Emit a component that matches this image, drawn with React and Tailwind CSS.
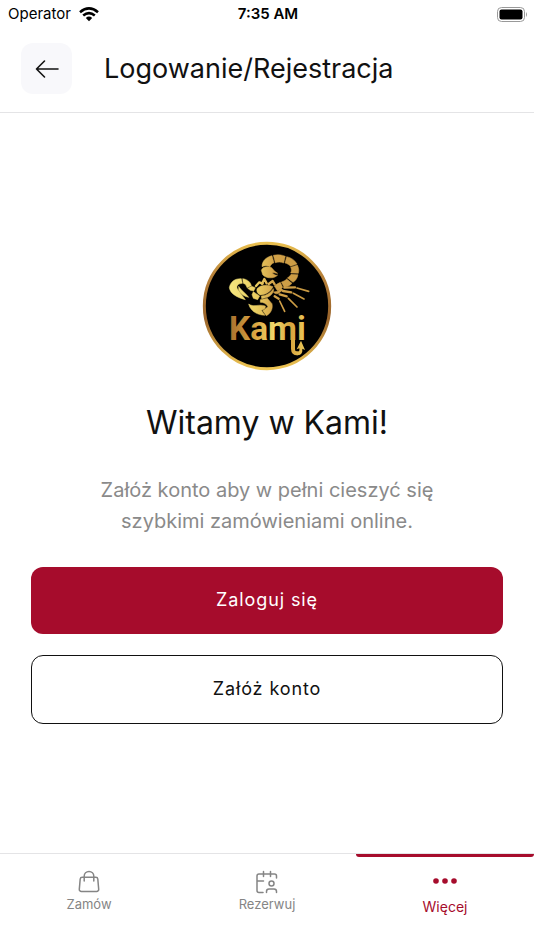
import React from "react";

const gold = "url(#gold)";

function Logo() {
  return (
    <svg viewBox="15 15 390 390" className="size-[130px]" role="img" aria-label="Kami">
      <defs>
        <linearGradient id="ring" x1="0" y1="0" x2="0" y2="1">
          <stop offset="0" stopColor="#e9bf4f" />
          <stop offset="0.25" stopColor="#b8823a" />
          <stop offset="0.6" stopColor="#9a642b" />
          <stop offset="1" stopColor="#efc653" />
        </linearGradient>
        <linearGradient id="gold" gradientUnits="userSpaceOnUse" x1="100" y1="150" x2="320" y2="150">
          <stop offset="0" stopColor="#f4e67e" />
          <stop offset="0.35" stopColor="#ebcf62" />
          <stop offset="0.6" stopColor="#d2a148" />
          <stop offset="1" stopColor="#c99a43" />
        </linearGradient>
        <linearGradient id="word" gradientUnits="userSpaceOnUse" x1="98" y1="0" x2="324" y2="0">
          <stop offset="0" stopColor="#a8702e" />
          <stop offset="0.35" stopColor="#dca843" />
          <stop offset="0.6" stopColor="#f0da6c" />
          <stop offset="0.8" stopColor="#d6a23d" />
          <stop offset="1" stopColor="#ecc858" />
        </linearGradient>
      </defs>
      <circle cx="210" cy="210" r="188" fill="#000" stroke="url(#ring)" strokeWidth="9" />
      <g fill={gold} stroke={gold} strokeWidth="1.500" strokeLinejoin="round">
        <path d="M193 103C196 92 212 90 222 94C229 99 231 106 242 112C233 112 230 109 226 111C233 117 238 119 242 117C232 129 206 128 197 116Z" />
        <path d="M195 92C195 74 208 63 225 59L231 80C224 83 220 88 219 92C211 88 203 88 195 92Z" />
        <path d="M229 58C241 55 254 56 265 61L260 81C251 77 242 78 235 80Z" />
        <path d="M269 62C283 65 294 73 300 84L281 91C276 86 271 83 264 81Z" />
        <path d="M301 87C306 97 306 105 304 112L281 111C284 105 284 100 281 94Z" />
        <path d="M303 116C301 127 296 134 288 139L271 126C277 122 280 119 282 115Z" />
        <path d="M285 142C277 151 268 154 261 153L253 138C260 136 265 133 269 129Z" />
        <path d="M257 154C252 160 246 163 241 164L232 150C238 145 244 142 250 139Z" />
        <path d="M97 155C100 137 114 127 133 128L136 142C124 143 117 149 121 158L145 191C116 184 99 170 97 155Z" />
        <path d="M137 128C152 130 161 139 163 149L150 155C148 148 145 144 139 142Z" />
        <path d="M125 151C132 163 144 169 155 184C142 182 131 174 125 161Z" />
        <path d="M164 151L175 155L170 165L160 163L152 157Z" />
        <path d="M180 158C190 147 210 145 228 152C223 165 207 176 190 177C181 174 178 166 180 158Z" />
        <path d="M169 167L179 174L188 180L182 191L169 187L165 176Z" />
        <path d="M193 180C210 178 222 169 229 158C233 166 223 179 211 184L194 188Z" />
        <path d="M190 191L211 187L225 203C229 220 219 234 208 239L197 224L213 212C207 202 199 199 190 199Z" />
        <path d="M155 204C170 215 184 203 205 210C207 220 195 222 193 223L204 238C180 237 160 225 155 204Z" />
        <path d="M229 168C235 175 241 175 247 170L258 162L252 157L242 166Z" />
      </g>
      <g fill="none" stroke={gold} strokeWidth="7" strokeLinejoin="round" strokeLinecap="round">
        <path d="M177 150L187 139L197 143" />
        <path d="M195 143L202 129L209 142" />
        <path d="M215 144L227 135L233 145" />
        <path d="M262 155L294 154" />
        <path d="M300 156L335 166" strokeWidth="5" />
        <path d="M258 165L283 169" />
        <path d="M289 172L321 189" strokeWidth="5" />
        <path d="M248 175L269 181" />
        <path d="M274 187L300 213" strokeWidth="5" />
        <path d="M233 181L245 188" />
        <path d="M248 195L263 226" strokeWidth="5" />
      </g>
      <text x="96" y="313" fill="url(#word)" className="font-['Roboto',sans-serif] text-[100px] font-bold">Kami</text>
      <path d="M288 309V338Q288 353 302 352" fill="none" stroke="url(#word)" strokeWidth="12" />
      <path d="M299 346Q309 349 307 337L299 340L312 314L324 342L316 338Q318 358 299 358Z" fill="url(#word)" />
    </svg>
  );
}

function BagIcon() {
  return (
    <svg viewBox="0 0 24 24" className="size-6" fill="none" stroke="currentColor" strokeWidth="1.500" strokeLinecap="round" strokeLinejoin="round" aria-hidden="true">
      <path d="M5.200 7.200h13.600a2 2 0 0 1 2 1.800l.9 10.300a2 2 0 0 1-2 2.200H4.300a2 2 0 0 1-2-2.200L3.200 9a2 2 0 0 1 2-1.800Z" />
      <path d="M7.200 11V6.200a4.800 4.800 0 0 1 9.600 0V11" />
    </svg>
  );
}

function BookingIcon() {
  return (
    <svg viewBox="0 0 24 24" className="size-6" fill="none" stroke="currentColor" strokeWidth="1.500" strokeLinecap="round" strokeLinejoin="round" aria-hidden="true">
      <path d="M8 22.500H4a2 2 0 0 1-2-2V6a2 2 0 0 1 2-2h15.500a2 2 0 0 1 2 2v2M8.500 1.500v5M15.500 1.500v5M2 11h6.500" />
      <circle cx="16.500" cy="13.500" r="2.500" />
      <path d="M11.500 22.500v-1a2.500 2.500 0 0 1 2.500-2.500h5a2.500 2.500 0 0 1 2.500 2.500v1" />
    </svg>
  );
}

function StatusBar() {
  return (
    <div className="grid h-7 grid-cols-3 items-center pr-1.5 pl-2 text-[15px] leading-5 text-black">
      <div className="flex items-center gap-2">
        <span>Operator</span>
        <svg viewBox="0 0 20 15" className="h-[15px] w-5" fill="none" stroke="currentColor" strokeWidth="2.600" aria-label="Wi-Fi">
          <path d="M1 5.200Q10-2.300 19 5.200M4.200 8.600Q10 3.800 15.800 8.600" />
          <path d="M6.800 11Q10 8.200 13.200 11L10 14.300Z" fill="currentColor" stroke="none" />
        </svg>
      </div>
      <span className="text-center font-semibold">7:35 AM</span>
      <svg viewBox="0 0 32 15" className="h-[15px] w-8 justify-self-end" aria-label="Bateria">
        <rect x="1.500" y="0.500" width="27" height="14" rx="4" fill="none" stroke="#999" />
        <rect x="3.500" y="2.500" width="23" height="10" rx="2" fill="#000" />
        <path d="M30 5q2 2.500 0 5Z" fill="#999" />
      </svg>
    </div>
  );
}

export default function App() {
  return (
    <div className="flex min-h-screen flex-col bg-white font-['Inter',sans-serif] text-[#111]">
      <StatusBar />
      <header className="flex items-center gap-8 border-b border-[#e4e4e6] px-[21px] pt-[15px] pb-[18px]">
        <button type="button" aria-label="Wstecz" className="flex size-[51px] shrink-0 items-center justify-center rounded-xl bg-[#f8f8fb]">
          <svg viewBox="0 0 24 20" className="h-5 w-6" fill="none" stroke="currentColor" strokeWidth="1.600" strokeLinecap="round" strokeLinejoin="round" aria-hidden="true">
            <path d="M23 10H1.500M9.500 2L1.500 10l8 8" />
          </svg>
        </button>
        <h1 className="text-[27px] leading-9">Logowanie/Rejestracja</h1>
      </header>

      <main className="flex flex-1 flex-col items-center justify-center px-[31px] pb-0.5 text-center">
        <Logo />
        <h2 className="mt-8 text-[32px] leading-10">Witamy w Kami!</h2>
        <p className="mt-8 max-w-[360px] text-xl leading-[31px] text-[#8a8a8a]">Załóż konto aby w pełni cieszyć się szybkimi zamówieniami online.</p>
        <button type="button" className="mt-[30px] h-[67px] w-full rounded-xl bg-[#a60c2c] text-lg tracking-wider text-white">Zaloguj się</button>
        <button type="button" className="mt-[21px] h-[69px] w-full rounded-xl border border-[#111] text-lg tracking-wider">Załóż konto</button>
      </main>

      <nav className="grid h-[97px] grid-cols-3 border-t border-[#e4e4e6] text-[13px] leading-4 text-[#858585]">
        <a href="#zamow" className="flex flex-col items-center gap-0.5 pt-4">
          <BagIcon />
          <span>Zamów</span>
        </a>
        <a href="#rezerwuj" className="flex flex-col items-center gap-0.5 pt-4">
          <BookingIcon />
          <span>Rezerwuj</span>
        </a>
        <a href="#wiecej" aria-current="page" className="flex flex-col items-center gap-1 text-[#a60c2c]">
          <span className="mb-2 h-[3px] w-full rounded-b-sm bg-[#a60c2c]" />
          <svg viewBox="0 0 24 24" className="size-6" fill="currentColor" aria-hidden="true">
            <circle cx="3" cy="12" r="2.800" />
            <circle cx="12" cy="12" r="2.800" />
            <circle cx="21" cy="12" r="2.800" />
          </svg>
          <span className="text-sm leading-5">Więcej</span>
        </a>
      </nav>
    </div>
  );
}
